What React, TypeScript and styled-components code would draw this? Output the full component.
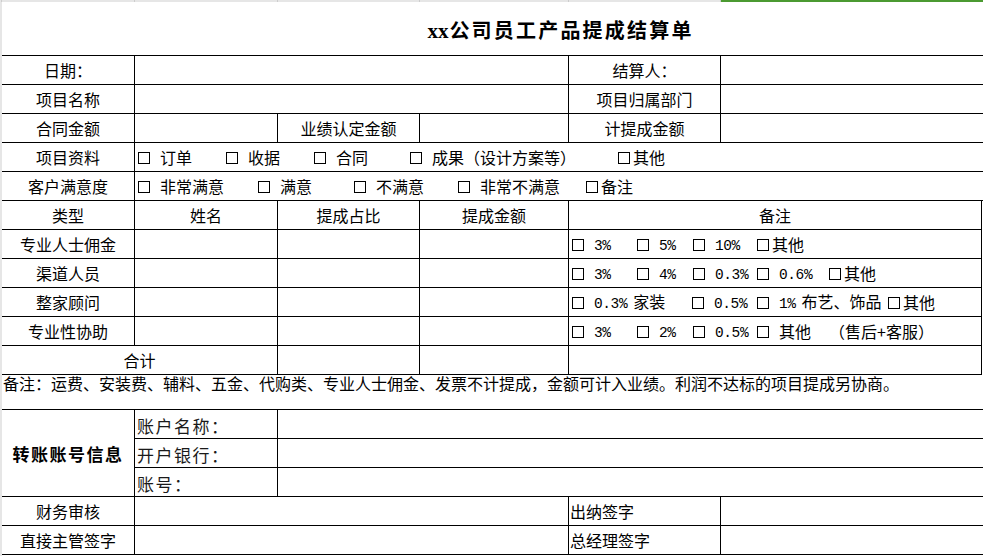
import React from "react";
import styled, { createGlobalStyle } from "styled-components";

const Global = createGlobalStyle`
  html, body { margin: 0; padding: 0; background: #fff; }
  body { font-family: "Noto Sans CJK SC", "Noto Sans", sans-serif; color: #000; }
`;

const Page = styled.div`
  width: 983px;
  height: 556px;
  overflow: hidden;
  background: #fff;
  display: flex;
  flex-direction: column;
`;

const TopBand = styled.div`
  display: grid;
  grid-template-columns: 2px 133px 143px 142px 149px 152px 262px;
  height: 2px;
  flex: 0 0 auto;
`;

const BandCell = styled.div<{ $selected?: boolean }>`
  box-sizing: border-box;
  background: ${(p) => (p.$selected ? "#4b9a31" : "#e6e6e6")};
  border-right: 1px solid ${(p) => (p.$selected ? "#4b9a31" : "#cdcdcd")};
`;

const Frame = styled.div`
  display: flex;
  flex: 1 1 auto;
`;

const LeftStrip = styled.div`
  width: 2px;
  flex: 0 0 2px;
  background: #e6e6e6;
`;

const Sheet = styled.div`
  display: grid;
  grid-template-columns: 133px 143px 142px 149px 152px 261px 1px;
  grid-template-rows: 54px repeat(11, 29px) 35px repeat(5, 29px);
  align-content: start;
`;

type CellProps = {
  $span?: number;
  $rows?: number;
  $noRight?: boolean;
  $noBottom?: boolean;
};

const Cell = styled.div<CellProps>`
  grid-column: span ${(p) => p.$span ?? 1};
  grid-row: span ${(p) => p.$rows ?? 1};
  box-sizing: border-box;
  border-right: ${(p) => (p.$noRight ? "none" : "1px solid #000")};
  border-bottom: ${(p) => (p.$noBottom ? "none" : "1px solid #000")};
  display: flex;
  align-items: center;
  min-width: 0;
  overflow: hidden;
  white-space: nowrap;
  font-size: 16px;
  line-height: 20px;
`;

const Label = styled(Cell)`
  justify-content: center;
`;

const Blank = styled(Cell)``;

const Gutter = styled(Cell).attrs({ $noRight: true, $noBottom: true })``;

const Title = styled(Cell)`
  justify-content: center;
  padding: 4px 0 0 136px;
`;

const TitleText = styled.span`
  font-size: 20px;
  font-weight: 700;
  letter-spacing: 2.2px;
`;

const Latin = styled.span`
  font-family: "Liberation Serif", serif;
  font-size: 21px;
  letter-spacing: 0;
  margin-right: 1px;
`;

const OptionCell = styled(Cell)`
  padding-left: 3px;
`;

const Option = styled.span<{ $w?: number }>`
  display: inline-flex;
  align-items: center;
  flex: 0 0 auto;
  width: ${(p) => (p.$w ? `${p.$w}px` : "auto")};
`;

const Box = styled.span`
  display: inline-block;
  width: 12px;
  height: 12px;
  box-sizing: border-box;
  border: 1px solid #000;
  flex: 0 0 12px;
  margin-top: 2px;
`;

const OptText = styled.span<{ $tight?: boolean }>`
  margin-left: ${(p) => (p.$tight ? 3 : 10)}px;
`;

const Num = styled.span`
  font-family: "Liberation Mono", monospace;
  font-size: 14.5px;
  letter-spacing: -0.4px;
`;

const Space = styled.span`
  display: inline-block;
  width: 6px;
`;

const PlainText = styled.span`
  flex: 0 0 auto;
`;

const Note = styled(Cell)`
  align-items: flex-start;
  padding: 0 0 0 1px;
  line-height: 17px;
  overflow: visible;
`;

const AccountTitle = styled(Cell)`
  justify-content: center;
  font-size: 17px;
  font-weight: 700;
  letter-spacing: 1.5px;
  padding-top: 2px;
`;

const AccountLabel = styled(Cell)`
  padding: 4px 0 0 2px;
  font-size: 17px;
  letter-spacing: 1.5px;
  color: #1a1a1a;
`;

const SignLabel = styled(Cell)`
  padding-left: 1px;
`;

type Opt = { w?: number; n?: string; t?: string; tight?: boolean; plain?: string };

const OptionList: React.FC<{ items: Opt[] }> = ({ items }) => (
  <>
    {items.map((o, i) =>
      o.plain ? (
        <PlainText key={i}>{o.plain}</PlainText>
      ) : (
        <Option key={i} $w={o.w}>
          <Box />
          <OptText $tight={o.tight}>
            {o.n && <Num>{o.n}</Num>}
            {o.n && o.t && <Space />}
            {o.t}
          </OptText>
        </Option>
      )
    )}
  </>
);

const projectItems: Opt[] = [
  { w: 88, t: "订单" },
  { w: 88, t: "收据" },
  { w: 96, t: "合同" },
  { w: 208, t: "成果（设计方案等）" },
  { t: "其他", tight: true },
];

const satisfactionItems: Opt[] = [
  { w: 120, t: "非常满意" },
  { w: 96, t: "满意" },
  { w: 104, t: "不满意" },
  { w: 128, t: "非常不满意" },
  { t: "备注", tight: true },
];

const commissionRows: { label: string; items: Opt[] }[] = [
  {
    label: "专业人士佣金",
    items: [
      { w: 65, n: "3%" },
      { w: 56, n: "5%" },
      { w: 64, n: "10%" },
      { t: "其他", tight: true },
    ],
  },
  {
    label: "渠道人员",
    items: [
      { w: 65, n: "3%" },
      { w: 56, n: "4%" },
      { w: 64, n: "0.3%" },
      { w: 72, n: "0.6%" },
      { t: "其他", tight: true },
    ],
  },
  {
    label: "整家顾问",
    items: [
      { w: 120, n: "0.3%", t: "家装" },
      { w: 65, n: "0.5%" },
      { w: 131, n: "1%", t: "布艺、饰品" },
      { t: "其他", tight: true },
    ],
  },
  {
    label: "专业性协助",
    items: [
      { w: 65, n: "3%" },
      { w: 56, n: "2%" },
      { w: 64, n: "0.5%" },
      { w: 72, t: "其他" },
      { plain: "（售后+客服）" },
    ],
  },
];

export default function App() {
  return (
    <Page>
      <Global />
      <TopBand>
        <BandCell />
        <BandCell />
        <BandCell />
        <BandCell />
        <BandCell />
        <BandCell />
        <BandCell $selected />
      </TopBand>
      <Frame>
        <LeftStrip />
        <Sheet>
          <Title $span={7} $noRight>
            <TitleText>
              <Latin>xx</Latin>公司员工产品提成结算单
            </TitleText>
          </Title>

          <Label>日期：</Label>
          <Blank $span={3} />
          <Label>结算人：</Label>
          <Blank $span={2} $noRight />

          <Label>项目名称</Label>
          <Blank $span={3} />
          <Label>项目归属部门</Label>
          <Blank $span={2} $noRight />

          <Label>合同金额</Label>
          <Blank />
          <Label>业绩认定金额</Label>
          <Blank />
          <Label>计提成金额</Label>
          <Blank $span={2} $noRight />

          <Label>项目资料</Label>
          <OptionCell $span={6} $noRight>
            <OptionList items={projectItems} />
          </OptionCell>

          <Label>客户满意度</Label>
          <OptionCell $span={6} $noRight>
            <OptionList items={satisfactionItems} />
          </OptionCell>

          <Label>类型</Label>
          <Label>姓名</Label>
          <Label>提成占比</Label>
          <Label>提成金额</Label>
          <Label $span={2}>备注</Label>
          <Gutter />

          {commissionRows.map((r) => (
            <React.Fragment key={r.label}>
              <Label>{r.label}</Label>
              <Blank />
              <Blank />
              <Blank />
              <OptionCell $span={2}>
                <OptionList items={r.items} />
              </OptionCell>
              <Gutter />
            </React.Fragment>
          ))}

          <Label $span={2}>合计</Label>
          <Blank />
          <Blank />
          <Blank $span={2} />
          <Gutter />

          <Note $span={7} $noRight>
            备注：运费、安装费、辅料、五金、代购类、专业人士佣金、发票不计提成，金额可计入业绩。利润不达标的项目提成另协商。
          </Note>

          <AccountTitle $rows={3}>转账账号信息</AccountTitle>
          <AccountLabel>账户名称：</AccountLabel>
          <Blank $span={5} $noRight />
          <AccountLabel>开户银行：</AccountLabel>
          <Blank $span={5} $noRight />
          <AccountLabel>账号：</AccountLabel>
          <Blank $span={5} $noRight />

          <Label>财务审核</Label>
          <Blank $span={3} />
          <SignLabel>出纳签字</SignLabel>
          <Blank $span={2} $noRight />

          <Label>直接主管签字</Label>
          <Blank $span={3} />
          <SignLabel>总经理签字</SignLabel>
          <Blank $span={2} $noRight />
        </Sheet>
      </Frame>
    </Page>
  );
}
